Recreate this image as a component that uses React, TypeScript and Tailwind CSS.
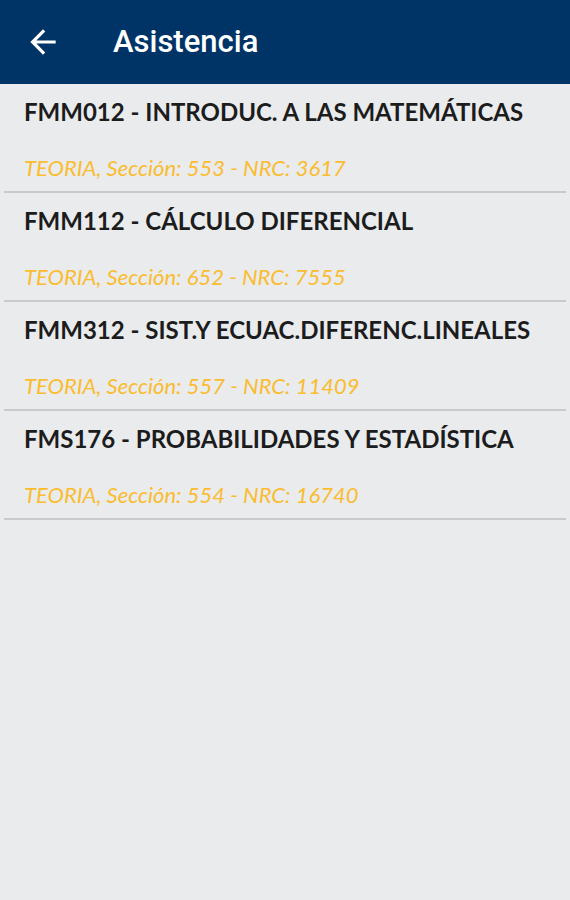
const cursos = [
  { titulo: "FMM012 - INTRODUC. A LAS MATEMÁTICAS", detalle: "TEORIA, Sección: 553 - NRC: 3617" },
  { titulo: "FMM112 - CÁLCULO DIFERENCIAL", detalle: "TEORIA, Sección: 652 - NRC: 7555" },
  { titulo: "FMM312 - SIST.Y ECUAC.DIFERENC.LINEALES", detalle: "TEORIA, Sección: 557 - NRC: 11409" },
  { titulo: "FMS176 - PROBABILIDADES Y ESTADÍSTICA", detalle: "TEORIA, Sección: 554 - NRC: 16740" },
];

const App = () => {
  return (
    <div className="w-[570px] h-[900px] bg-[#e9ebed] flex flex-col">
      <div className="h-[84px] bg-[#013466] flex items-center shrink-0">
        <div className="w-[113px] pl-[24px]">
          {/* material back arrow */}
          <svg width="38" height="38" viewBox="0 0 24 24" fill="white">
            <path d="M20 11H7.83l5.59-5.59L12 4l-8 8 8 8 1.41-1.41L7.83 13H20v-2z" />
          </svg>
        </div>
        <h1 className="text-white text-[31px] font-medium font-['Roboto',sans-serif]">Asistencia</h1>
      </div>
      <div className="flex flex-col">
        {cursos.map((c) => (
          <div key={c.titulo} className="mx-1 px-5 pt-[14px] pb-[9px] border-b-2 border-[#c8cacc] font-['Lato',sans-serif]">
            <div className="text-[24px] leading-[28px] font-bold text-[#1c1c1c]">{c.titulo}</div>
            <div className="mt-[28px] text-[22px] leading-[28px] italic text-[#fbbc2d]">{c.detalle}</div>
          </div>
        ))}
      </div>
    </div>
  );
};

export default App;
